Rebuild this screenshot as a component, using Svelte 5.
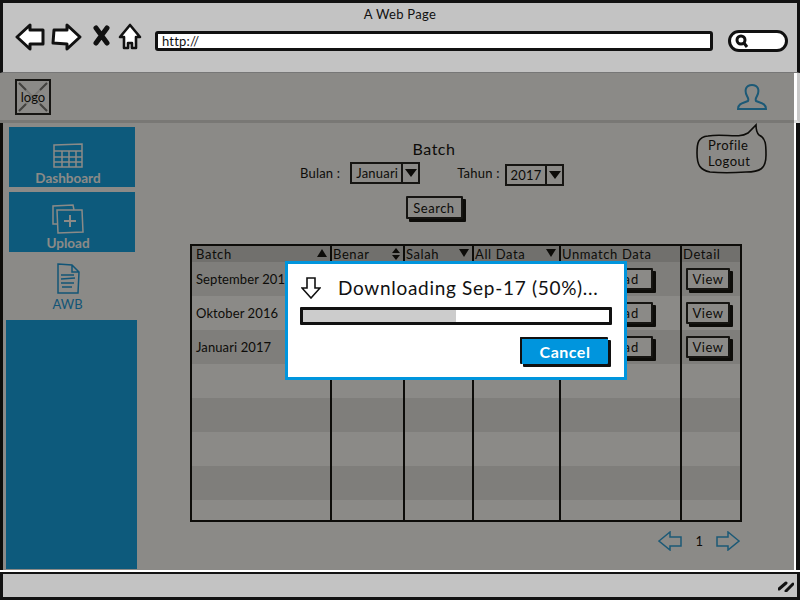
<script>
	const rows = [
		{ batch: 'September 2016' },
		{ batch: 'Oktober 2016' },
		{ batch: 'Januari 2017' },
		{ batch: '' },
		{ batch: '' },
		{ batch: '' },
		{ batch: '' },
		{ batch: '' }
	];
	const progress = 50;
</script>

<div class="window">
	<header class="chrome">
		<div class="title">A Web Page</div>
		<div class="toolbar">
			<svg class="nav" width="130" height="37" viewBox="0 0 130 37">
				<path d="M2 15 L15 3 L15 8 L28 8 L28 22 L15 22 L15 27 Z" fill="#fff" stroke="#111" stroke-width="3" stroke-linejoin="round"/>
				<path d="M65 15 L52 3 L52 8 L39 8 L38 21 L52 22 L52 27 Z" fill="#fff" stroke="#111" stroke-width="3" stroke-linejoin="round"/>
				<path d="M81 6 L92 21 M92 6 L81 21" stroke="#111" stroke-width="5" stroke-linecap="round"/>
				<path d="M115 3 L105 15 L109 15 L109 26 L113 26 L113 21 L117 21 L117 26 L121 26 L121 15 L125 15 Z" fill="#fff" stroke="#111" stroke-width="2.6" stroke-linejoin="round"/>
			</svg>
			<div class="url">http://</div>
			<div class="search-pill">
				<svg width="16" height="14" viewBox="0 0 16 14">
					<circle cx="7" cy="6" r="4" fill="none" stroke="#111" stroke-width="3"/>
					<path d="M10 9 L13 13" stroke="#111" stroke-width="3"/>
				</svg>
			</div>
		</div>
	</header>

	<div class="page">
		<div class="topbar">
			<div class="logo">
				<svg width="32" height="32" viewBox="0 0 32 32">
					<path d="M2 2 L30 30 M30 2 L2 30" stroke="#ddd" stroke-width="2"/>
					<path d="M2 2 L9 9 M30 2 L23 9 M2 30 L9 23 M30 30 L23 23" stroke="#777" stroke-width="2"/>
				</svg>
				<span>logo</span>
			</div>
			<svg class="user" width="32" height="28" viewBox="0 0 32 28">
				<path d="M2 26 C2 20 8 20 12 18 C13 16 12 15 11 13 C8 7 10 2 16 2 C22 2 24 7 21 13 C20 15 19 16 20 18 C24 20 30 20 30 26 Z" fill="none" stroke="#2ea3df" stroke-width="2"/>
			</svg>
		</div>

		<div class="content">
			<nav class="sidebar">
				<a class="item">
					<svg width="30" height="26" viewBox="0 0 30 26">
						<path d="M1 2 L29 1 L29 24 L1 24 Z M1 8 L29 8 M1 14 L29 14 M1 19 L29 19 M9 8 L9 24 M16 8 L16 24 M23 8 L23 24" fill="none" stroke="#fff" stroke-width="1.5"/>
					</svg>
					<span>Dashboard</span>
				</a>
				<a class="item">
					<svg width="32" height="30" viewBox="0 0 32 30">
						<path d="M5 20 L1 20 L1 2 L21 1 L22 6" fill="none" stroke="#fff" stroke-width="1.5"/>
						<path d="M5 6 L30 6 L31 28 L6 29 Z" fill="none" stroke="#fff" stroke-width="1.5"/>
						<path d="M18 11 L18 23 M12 17 L24 17" stroke="#fff" stroke-width="2"/>
					</svg>
					<span>Upload</span>
				</a>
				<a class="item active">
					<svg width="24" height="32" viewBox="0 0 24 32">
						<path d="M2 1 L16 2 L23 9 L22 30 L2 30 Z M16 2 L16 9 L23 9" fill="none" stroke="#1b9be0" stroke-width="1.5"/>
						<path d="M5 12 L18 12 M5 16 L19 15 M5 20 L18 20 M6 24 L16 24" stroke="#1b9be0" stroke-width="1.5"/>
					</svg>
					<span>AWB</span>
				</a>
				<div class="filler"></div>
			</nav>

			<main class="main">
				<div class="filters">
					<h1>Batch</h1>
					<div class="fields">
						<label for="bulan">Bulan :</label>
						<div class="select" id="bulan"><span>Januari</span><i></i></div>
						<label class="second" for="tahun">Tahun :</label>
						<div class="select low" id="tahun"><span>2017</span><i></i></div>
					</div>
					<button class="btn search">Search</button>
				</div>

				<div class="grid-wrap">
					<table>
						<colgroup>
							<col style="width:139px" />
							<col style="width:73px" />
							<col style="width:69px" />
							<col style="width:87px" />
							<col style="width:121px" />
							<col />
						</colgroup>
						<thead>
							<tr>
								<th>Batch<b class="up"></b></th>
								<th>Benar<b class="both"></b></th>
								<th>Salah<b class="down"></b></th>
								<th>All Data<b class="down"></b></th>
								<th>Unmatch Data</th>
								<th>Detail</th>
							</tr>
						</thead>
						<tbody>
							{#each rows as row}
								<tr>
									<td>{row.batch}</td>
									<td></td>
									<td></td>
									<td></td>
									<td>{#if row.batch}<button class="btn dl">Download</button>{/if}</td>
									<td>{#if row.batch}<button class="btn view">View</button>{/if}</td>
								</tr>
							{/each}
						</tbody>
					</table>
				</div>

				<div class="pager">
					<svg width="24" height="20" viewBox="0 0 24 20">
						<path d="M1 10 L12 1 L12 6 L23 6 L23 15 L12 15 L12 19 Z" fill="none" stroke="#2ea3df" stroke-width="1.5"/>
					</svg>
					<span>1</span>
					<svg width="24" height="20" viewBox="0 0 24 20">
						<path d="M23 10 L12 1 L12 6 L1 6 L1 15 L12 15 L12 19 Z" fill="none" stroke="#2ea3df" stroke-width="1.5"/>
					</svg>
				</div>
			</main>
		</div>

		<div class="bubble">
			<svg width="72" height="52" viewBox="0 0 72 52">
				<path d="M12 13 C28 10 42 16 52 10 L60 2 C60 6 60 9 63 12 C70 15 70 22 70 32 C70 46 64 49 50 49 C36 50 24 50 14 49 C4 47 1 42 1 30 C1 20 2 14 12 13 Z" fill="none" stroke="#111" stroke-width="1.6"/>
			</svg>
			<div>Profile</div>
			<div>Logout</div>
		</div>

		<div class="scrim">
			<div class="dialog" role="dialog">
				<div class="dialog-head">
					<svg width="20" height="22" viewBox="0 0 20 22">
						<path d="M10 21 L1 11 L6 11 L6 1 L14 1 L14 11 L19 11 Z" fill="none" stroke="#111" stroke-width="1.6"/>
					</svg>
					<span>Downloading Sep-17 ({progress}%)...</span>
				</div>
				<div class="bar"><div class="fill" style="width:{progress}%"></div></div>
				<div class="dialog-foot"><button class="btn cancel">Cancel</button></div>
			</div>
		</div>
	</div>

	<footer class="status">
		<svg width="16" height="12" viewBox="0 0 16 12">
			<path d="M1 9 L8 3 M8 11 L15 4" stroke="#111" stroke-width="3" stroke-linecap="round"/>
		</svg>
	</footer>
</div>

<style>
	:global(body) {
		margin: 0;
		background: #fff;
	}

	.window {
		position: relative;
		display: flex;
		flex-direction: column;
		width: 800px;
		height: 600px;
		font-family: "Lato", sans-serif;
		color: #111;
		overflow: hidden;
	}

	.chrome {
		height: 69px;
		flex: none;
		background: #c3c3c3;
		border: 3px solid #111;
		border-bottom: 1px solid #777;
	}

	.title {
		padding-top: 4px;
		font-size: 13px;
		line-height: 14px;
		text-align: center;
		letter-spacing: 0.3px;
	}

	.toolbar {
		display: flex;
		align-items: center;
		margin-top: 1px;
		padding-left: 12px;
	}

	.url {
		box-sizing: border-box;
		width: 558px;
		height: 20px;
		margin-left: 10px;
		padding-left: 4px;
		border: 3px solid #111;
		border-radius: 3px;
		background: #fff;
		font-size: 13px;
		line-height: 14px;
		letter-spacing: 0.2px;
	}

	.search-pill {
		box-sizing: border-box;
		display: flex;
		align-items: center;
		width: 60px;
		height: 22px;
		margin-left: 15px;
		padding-left: 3px;
		border: 3px solid #111;
		border-radius: 11px;
		background: #fff;
	}

	.page {
		position: relative;
		flex: 1;
		display: flex;
		flex-direction: column;
		min-height: 0;
		background: #fff;
	}

	.topbar {
		display: flex;
		align-items: center;
		justify-content: space-between;
		box-sizing: border-box;
		height: 50px;
		padding: 0 29px 0 15px;
		border-bottom: 3px solid #ddd;
		border-right: 3px solid #c8c8c8;
	}

	.logo {
		position: relative;
		display: flex;
		align-items: center;
		justify-content: center;
		box-sizing: border-box;
		width: 36px;
		height: 36px;
		border: 2px solid #222;
		font-size: 13px;
	}

	.logo svg {
		position: absolute;
		inset: 0;
	}

	.logo span {
		position: relative;
	}

	.content {
		flex: 1;
		display: flex;
		min-height: 0;
		margin-bottom: 2px;
		border-left: 3px solid #111;
		border-right: 4px solid #111;
	}

	.sidebar {
		display: flex;
		flex-direction: column;
		flex: none;
		width: 131px;
		margin-left: 3px;
		padding: 4px 0 1px;
		box-sizing: border-box;
	}

	.item {
		display: flex;
		flex-direction: column;
		align-items: center;
		justify-content: flex-end;
		gap: 2px;
		height: 60px;
		margin: 0 2px 5px 3px;
		padding: 0 8px 2px 0;
		box-sizing: border-box;
		background: #11a5ea;
		color: #fff;
		font-size: 13.5px;
		font-weight: 700;
		line-height: 14px;
	}

	.item.active {
		height: 67px;
		margin: -5px 0 1px;
		padding-top: 4px;
		justify-content: center;
		background: #fff;
		color: #1b9be0;
		font-size: 13px;
		font-weight: 400;
	}

	.filler {
		flex: 1;
		background: #11a5ea;
	}

	.main {
		flex: 1;
		display: flex;
		flex-direction: column;
		padding-left: 53px;
	}

	.filters {
		display: flex;
		flex-direction: column;
		align-items: center;
		width: 268px;
		margin-left: 110px;
		padding-top: 16px;
	}

	h1 {
		margin: 0;
		font-size: 16px;
		font-weight: 400;
		line-height: 20px;
		letter-spacing: 0.5px;
	}

	.fields {
		display: flex;
		align-items: center;
		width: 100%;
		margin-top: 3px;
		font-size: 13px;
		letter-spacing: 0.2px;
		white-space: nowrap;
	}

	.second {
		margin-left: 37px;
	}

	.select {
		display: flex;
		box-sizing: border-box;
		height: 22px;
		margin-left: 10px;
		border: 2px solid #222;
		line-height: 18px;
	}

	.select.low {
		margin-left: 5px;
		transform: translateY(2px);
	}

	.select span {
		padding: 0 3px 0 4px;
		border-right: 2px solid #222;
	}

	.select i {
		position: relative;
		width: 15px;
	}

	.select i::after {
		content: "";
		position: absolute;
		left: 2px;
		top: 5px;
		border: 6px solid transparent;
		border-bottom: 0;
		border-top: 8px solid #111;
	}

	.btn {
		box-sizing: border-box;
		padding: 0;
		border: 2px solid #222;
		border-radius: 1px;
		box-shadow: 3px 3px 0 #111;
		background: #fff;
		color: #111;
		font-family: inherit;
		font-size: 13px;
		letter-spacing: 0.5px;
	}

	.search {
		width: 57px;
		height: 23px;
		margin-top: 12px;
	}

	.grid-wrap {
		box-sizing: border-box;
		width: 552px;
		height: 278px;
		margin-top: 25px;
		border: 2px solid #111;
		overflow: hidden;
	}

	table {
		width: 100%;
		table-layout: fixed;
		border-collapse: collapse;
		font-size: 13px;
		letter-spacing: 0.1px;
	}

	th {
		position: relative;
		height: 16px;
		padding: 0 0 0 1px;
		background: #cfcfcf;
		border-left: 2px solid #111;
		font-weight: 400;
		text-align: left;
		line-height: 16px;
		letter-spacing: 0.6px;
	}

	th:first-child {
		padding-left: 4px;
	}

	th:first-child,
	td:first-child {
		border-left: 0;
	}

	th b {
		position: absolute;
		right: 3px;
		top: 3px;
		border: 5px solid transparent;
	}

	th b.up {
		border-top: 0;
		border-bottom: 8px solid #111;
	}

	th b.down {
		border-bottom: 0;
		border-top: 8px solid #111;
	}

	th b.both {
		top: 2px;
		border: 4px solid transparent;
		border-top: 0;
		border-bottom: 5px solid #111;
	}

	th b.both::after {
		content: "";
		position: absolute;
		left: -4px;
		top: 7px;
		border: 4px solid transparent;
		border-bottom: 0;
		border-top: 5px solid #111;
	}

	td {
		height: 34px;
		padding: 0 0 0 4px;
		box-sizing: border-box;
		border-left: 2px solid #111;
	}

	tbody tr:nth-child(odd) td {
		background: #e8e8e8;
	}

	.dl {
		width: 88px;
		height: 22px;
		padding-right: 6px;
		letter-spacing: 1px;
	}

	.view {
		width: 44px;
		height: 22px;
	}

	.pager {
		display: flex;
		align-items: center;
		justify-content: flex-end;
		gap: 13px;
		width: 552px;
		margin-top: 9px;
		padding-right: 2px;
		box-sizing: border-box;
		font-size: 13px;
	}

	.bubble {
		position: absolute;
		left: 696px;
		top: 50px;
		box-sizing: border-box;
		width: 72px;
		height: 52px;
		padding: 14px 0 0 12px;
		font-size: 13px;
		line-height: 16px;
		letter-spacing: 0.5px;
	}

	.bubble svg {
		position: absolute;
		left: 0;
		top: 0;
	}

	.scrim {
		position: absolute;
		inset: 0 6px 2px 0;
		background: rgba(8, 6, 0, 0.47);
	}

	.dialog {
		position: absolute;
		left: 285px;
		top: 188px;
		box-sizing: border-box;
		width: 342px;
		height: 119px;
		padding: 12px 13px 0 12px;
		border: 3px solid #0095dd;
		background: #fff;
	}

	.dialog-head {
		display: flex;
		align-items: center;
		gap: 17px;
		padding-left: 1px;
		font-size: 19px;
		letter-spacing: 0.7px;
		line-height: 24px;
	}

	.bar {
		box-sizing: border-box;
		width: 312px;
		height: 18px;
		margin-top: 7px;
		border: 3px solid #111;
		border-radius: 1px;
		background: #fff;
	}

	.fill {
		height: 100%;
		background: #ccc;
	}

	.dialog-foot {
		display: flex;
		justify-content: flex-end;
		padding: 12px 3px 0 0;
	}

	.cancel {
		width: 88px;
		height: 27px;
		border: 0;
		border-top: 2px solid #111;
		border-left: 2px solid #111;
		background: #0095dd;
		color: #fff;
		font-size: 16px;
		font-weight: 700;
	}

	.status {
		display: flex;
		align-items: center;
		justify-content: flex-end;
		box-sizing: border-box;
		flex: none;
		height: 28px;
		padding-right: 3px;
		background: #c3c3c3;
		border: 3px solid #111;
		border-top-width: 2px;
	}
</style>
